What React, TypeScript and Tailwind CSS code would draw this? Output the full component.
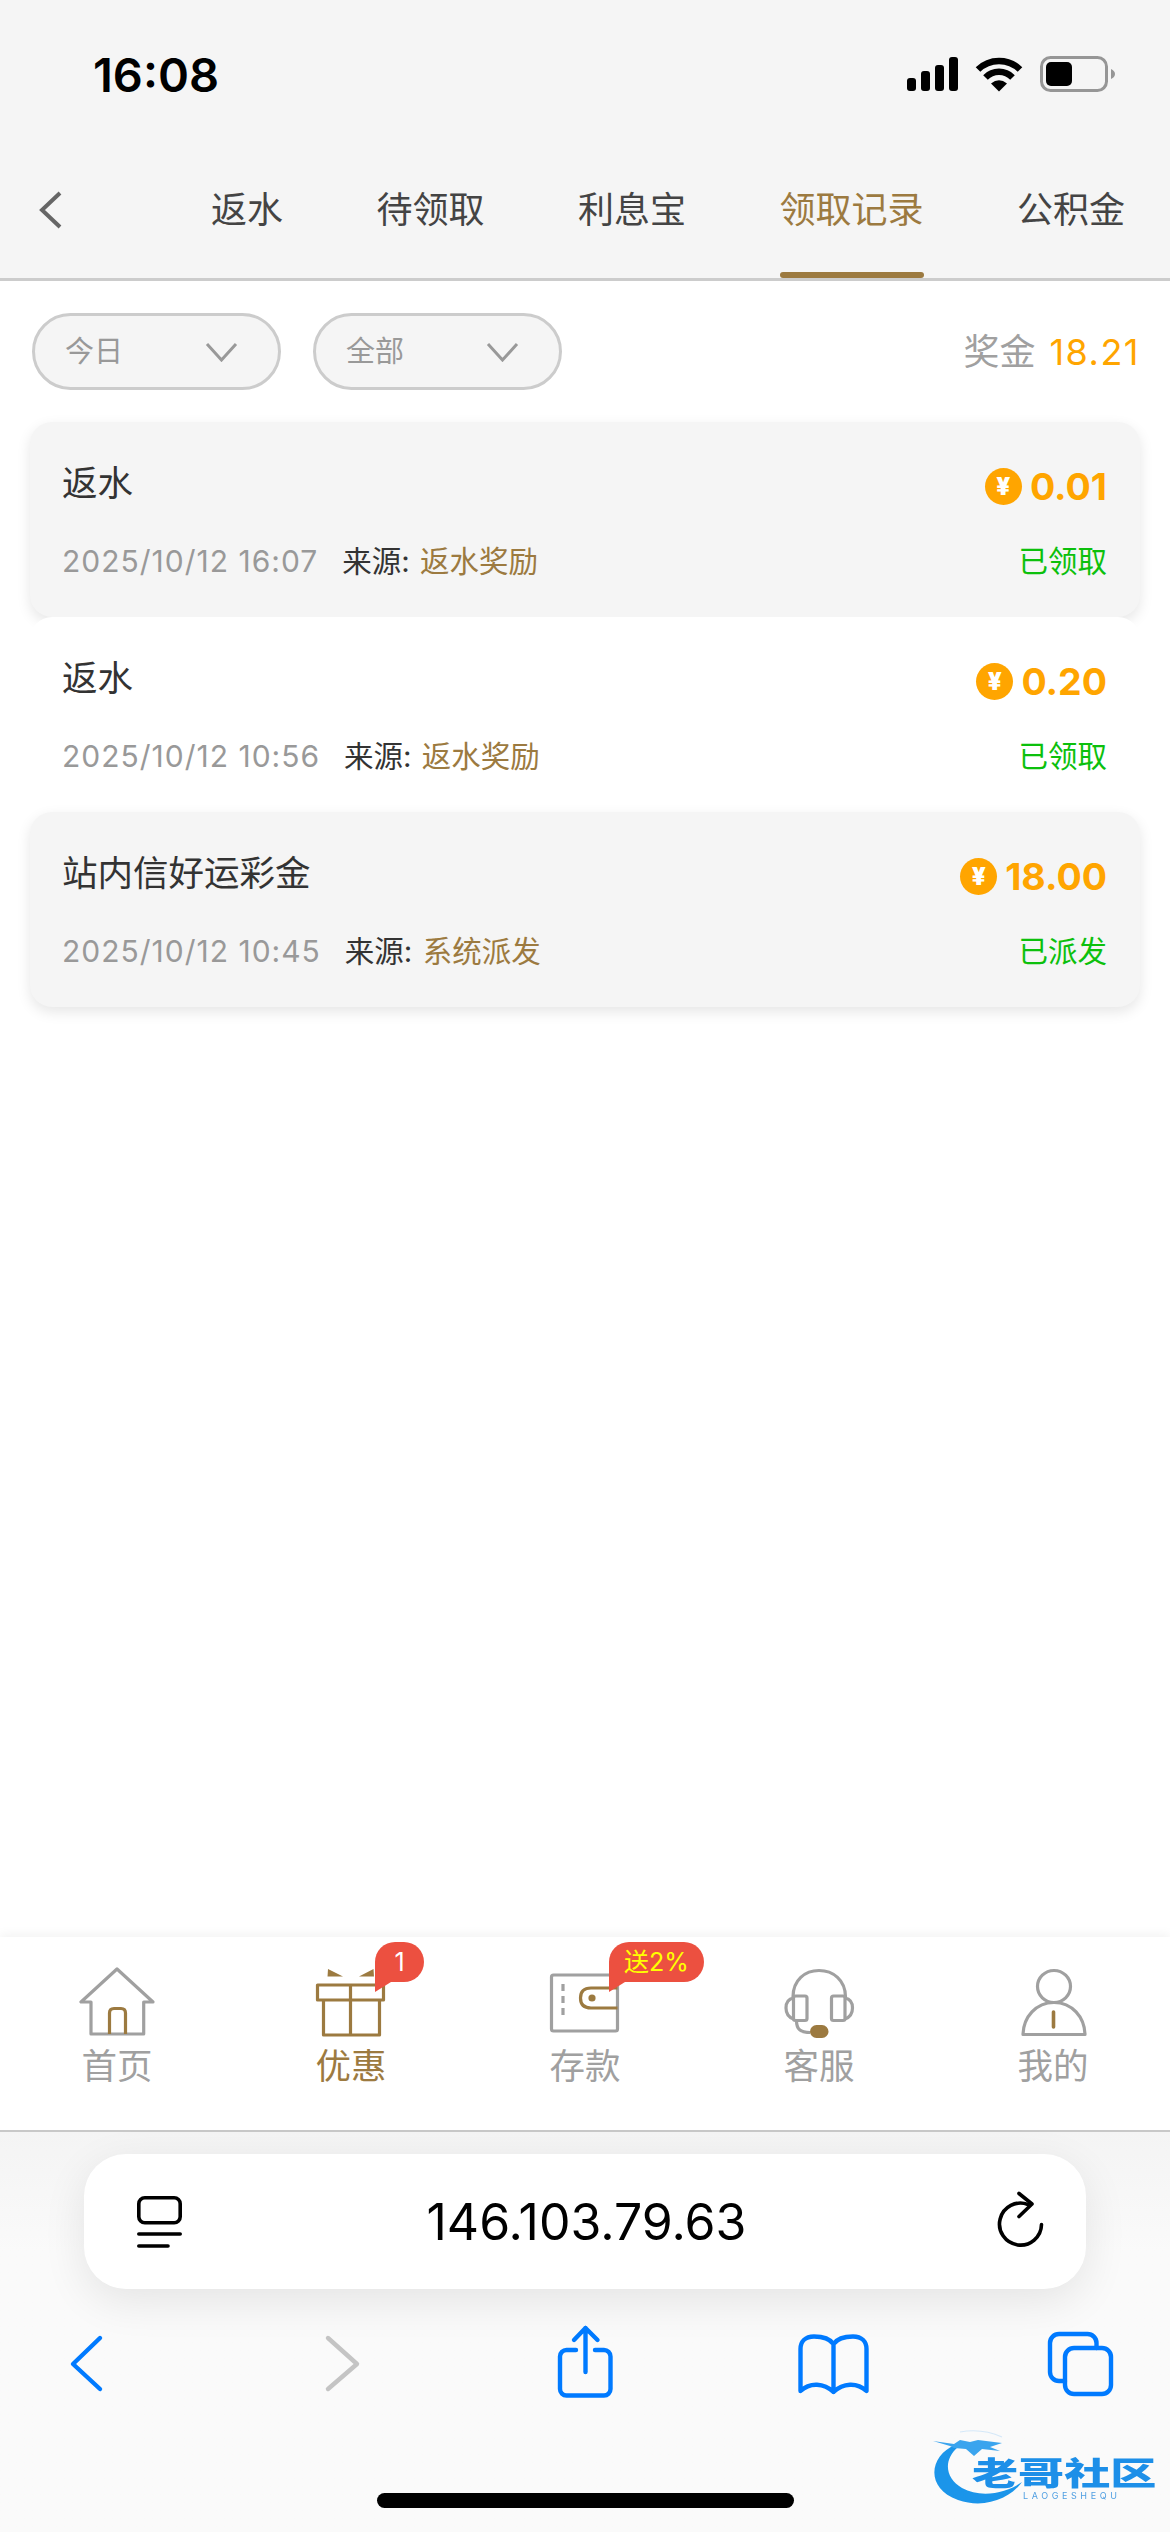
import React from "react";

const BROWN = "#9c7a40";
const GREY = "#a0a0a0";

type Rec = { title: string; amount: string; time: string; source: string; status: string; tint: boolean };

const records: Rec[] = [
  { title: "返水", amount: "0.01", time: "2025/10/12 16:07", source: "返水奖励", status: "已领取", tint: true },
  { title: "返水", amount: "0.20", time: "2025/10/12 10:56", source: "返水奖励", status: "已领取", tint: false },
  { title: "站内信好运彩金", amount: "18.00", time: "2025/10/12 10:45", source: "系统派发", status: "已派发", tint: true },
];

const tabs = ["返水", "待领取", "利息宝", "领取记录", "公积金"];

function StatusIcons() {
  return (
    <div className="flex items-center gap-[17px]">
      <svg width="51" height="34" viewBox="0 0 51 34" fill="#000">
        <rect x="0" y="21" width="9" height="13" rx="3" />
        <rect x="14" y="14" width="9" height="20" rx="3" />
        <rect x="28" y="8" width="9" height="26" rx="3" />
        <rect x="42" y="0" width="9" height="34" rx="3" />
      </svg>
      <svg width="48" height="36" viewBox="0 0 48 36" fill="none" stroke="#000" strokeWidth="6.5">
        <path d="M3 13.5A30 30 0 0 1 45 13.5" />
        <path d="M10.5 21.5A19 19 0 0 1 37.5 21.5" />
        <path d="M24 35.5L16 27.5Q24 21 32 27.5Z" fill="#000" stroke="none" />
      </svg>
      <svg width="75" height="36" viewBox="0 0 75 36" fill="none">
        <rect x="1.5" y="1.5" width="65" height="33" rx="9" stroke="#969696" strokeWidth="3" />
        <rect x="6" y="6" width="26" height="24" rx="5" fill="#000" />
        <path d="M71 13C73.5 14 75 16 75 18C75 20 73.5 22 71 23Z" fill="#969696" />
      </svg>
    </div>
  );
}

function Chevron() {
  return (
    <svg width="33" height="20" viewBox="0 0 33 20" fill="none" stroke="#999" strokeWidth="3">
      <path d="M2 2L16.5 18L31 2" />
    </svg>
  );
}

function FilterPill({ label }: { label: string }) {
  return (
    <div className="flex h-[77px] w-[249px] items-center justify-between rounded-[39px] border-[3px] border-[#cccccc] bg-[#f5f5f5] pl-[30px] pr-[40px]">
      <span className="text-[29px] text-[#999999]">{label}</span>
      <Chevron />
    </div>
  );
}

function Coin() {
  return (
    <span className="flex h-[37px] w-[37px] items-center justify-center rounded-full bg-[#ffa500] text-[24px] font-black leading-none text-white">
      ¥
    </span>
  );
}

function RecordCard({ rec, index }: { rec: Rec; index: number }) {
  // The white row sits flat on the page; only the tinted rows cast a shadow.
  const tone = rec.tint ? "bg-[#f5f5f5] shadow-[0_5px_14px_rgba(0,0,0,0.1)]" : "bg-white";
  const layer = index === 0 ? "z-0" : index === 1 ? "z-10" : "z-20";
  return (
    <div className={`relative ${layer} ${tone} flex h-[195px] flex-col rounded-[22px] pl-[32px] pr-[33px]`}>
      <div className="flex h-[116px] items-center justify-between pt-[13px]">
        <span className="-mt-[6px] text-[35.5px] leading-none text-[#333333]">{rec.title}</span>
        <span className="flex items-center gap-[8px]">
          <Coin />
          <span className="text-[37.5px] font-bold leading-none text-[#ffa500]">{rec.amount}</span>
        </span>
      </div>
      <div className="flex items-center justify-between">
        <div className="flex items-center gap-[24px] text-[29.5px] leading-[46px]">
          <span className="text-[30px] tracking-[1px] text-[#999999]">{rec.time}</span>
          <span className="text-[#333333]">
            来源: <span className="ml-[2px] text-[#9c7a40]">{rec.source}</span>
          </span>
        </div>
        <span className="text-[29.5px] leading-[46px] text-[#0cc00c]">{rec.status}</span>
      </div>
    </div>
  );
}

function Bubble({ children, width }: { children: React.ReactNode; width: string }) {
  return (
    <div className={`absolute left-[64px] -top-[23px] z-10 ${width}`}>
      <div className="flex h-[40px] items-center justify-center rounded-[20px] rounded-bl-none bg-[#ec5040] text-[25px] leading-none">
        {children}
      </div>
      <svg className="block" width="16" height="10" viewBox="0 0 16 10" fill="#ec5040">
        <path d="M0 0H16L0 10Z" />
      </svg>
    </div>
  );
}

function HomeIcon() {
  return (
    <svg width="80" height="72" viewBox="0 0 80 72" fill="none" strokeWidth="3.2" strokeLinejoin="round">
      <path d="M14 37V69H66.7V37H76L40 4L4 37Z" stroke={GREY} />
      <path d="M32.5 69V48Q32.5 43.5 37 43.5H44Q48.5 43.5 48.5 48V69" stroke={BROWN} />
    </svg>
  );
}

function GiftIcon() {
  return (
    <svg width="80" height="72" viewBox="0 0 80 72" fill="none" stroke={BROWN} strokeWidth="3.2" strokeLinejoin="round">
      <rect x="6.5" y="20" width="66" height="15" />
      <path d="M12.5 35V70H68.5V35M39.5 20V70" />
      <path d="M17 4L32 11.5H16.5Z" fill={BROWN} stroke="none" />
      <path d="M62.5 4L48 11.5H63Z" fill={BROWN} stroke="none" />
    </svg>
  );
}

function WalletIcon() {
  return (
    <svg width="80" height="72" viewBox="0 0 80 72" fill="none" strokeWidth="3.2" strokeLinejoin="round">
      <rect x="6.5" y="10" width="66" height="56" rx="2" stroke={GREY} />
      <path d="M18 19V54" stroke={GREY} strokeDasharray="7 5" />
      <path d="M72.5 23H46Q35.5 23 35.5 33Q35.5 43 46 43H72.5" stroke={BROWN} />
      <circle cx="47" cy="33" r="3.6" fill={BROWN} />
    </svg>
  );
}

function HeadsetIcon() {
  return (
    <svg width="80" height="72" viewBox="0 0 80 72" fill="none" stroke={GREY} strokeWidth="3.2" strokeLinejoin="round" className="overflow-visible">
      <path d="M14 32C14 15 26 5.5 40 5.5C54 5.5 66.5 15 66.5 32" />
      <rect x="14.5" y="31" width="13.5" height="24.5" rx="2" />
      <rect x="52.5" y="31" width="13.5" height="24.5" rx="2" />
      <path d="M14.5 33C9 34 7 38 7 43C7 48 9 52 14.5 54" />
      <path d="M66 33C71.5 34 73.5 38 73.5 43C73.5 48 71.5 52 66 54" />
      <path d="M17.5 55.5C17.5 64 21 67.5 31 67.5" />
      <rect x="31" y="60" width="18.5" height="13" rx="6.5" fill={BROWN} stroke="none" />
    </svg>
  );
}

function PersonIcon() {
  return (
    <svg width="80" height="72" viewBox="0 0 80 72" fill="none" stroke={GREY} strokeWidth="3.2" strokeLinejoin="round">
      <ellipse cx="41" cy="21.5" rx="16.5" ry="16" />
      <path d="M10 69.5C10.5 52 23 37.5 41 37.5C59 37.5 71.5 52 72 69.5Z" />
      <path d="M40.5 47V62" stroke={BROWN} strokeLinecap="round" strokeWidth="3.6" />
    </svg>
  );
}

function BottomTab({ label, active, icon, badge }: { label: string; active?: boolean; icon: React.ReactNode; badge?: React.ReactNode }) {
  return (
    <div className="flex flex-col items-center pt-[28px]">
      <div className="relative h-[72px] w-[80px]">
        {icon}
        {badge}
      </div>
      <span className={`mt-[8px] text-[35.5px] leading-[44px] ${active ? "text-[#9c7a40]" : "text-[#a0a0a0]"}`}>{label}</span>
    </div>
  );
}

function PageIcon() {
  return (
    <svg width="45" height="52" viewBox="0 0 45 52" fill="none" stroke="#000" strokeWidth="3.6" strokeLinecap="round">
      <rect x="1.8" y="1.8" width="41.4" height="25" rx="6" />
      <path d="M1.8 38H43.2" />
      <path d="M1.8 50H31" />
    </svg>
  );
}

function ReloadIcon() {
  return (
    <svg width="52" height="62" viewBox="0 0 52 62" fill="none" stroke="#000" strokeWidth="3.6" strokeLinecap="round" strokeLinejoin="round">
      <path d="M33 13.5A21 21 0 1 0 46.5 33.5" />
      <path d="M24 2.5L37 13L24 25.5" />
    </svg>
  );
}

function ToolIcon({ children }: { children: React.ReactNode }) {
  return (
    <svg width="80" height="80" viewBox="0 0 80 80" fill="none" strokeWidth="4.4" strokeLinecap="round" strokeLinejoin="round" stroke="#007aff">
      {children}
    </svg>
  );
}

function Watermark() {
  return (
    <div className="absolute bottom-0 right-0 h-[112px] w-[260px]">
      <svg width="260" height="112" viewBox="0 0 260 112" className="absolute left-0 top-0 blur-[0.7px]">
        <path d="M45 25C20 35 14 68 48 80C74 89 100 79 112 62C95 74 70 78 52 68C35 58 33 40 48 27Z" fill="#1b95ea" />
        <path d="M23 21L44 24L50 20L60 22L68 20L92 23L80 27L90 31L72 29L64 36L56 29L44 28L40 26Z" fill="#3aa4ee" />
        <path d="M50 12Q72 8 92 17" fill="none" stroke="#d5e8f8" strokeWidth="1.2" />
      </svg>
      <span className="absolute left-[62px] top-[39px] origin-left scale-x-[1.44] text-[32px] font-black leading-[30px] text-[#1d8fe8] blur-[0.5px]">
        老哥社区
      </span>
      <span className="absolute left-[113px] top-[71px] text-[9px] leading-[10px] tracking-[3.6px] text-[#4f9fe2] blur-[0.3px]">
        LAOGESHEQU
      </span>
    </div>
  );
}

export default function App() {
  return (
    <div className="relative flex h-[2532px] w-[1170px] flex-col overflow-hidden bg-white font-[family-name:Inter,'Noto_Sans_CJK_SC',sans-serif]">
      {/* system status bar and section tabs */}
      <header className="bg-[#f5f5f5]">
        <div className="flex h-[148px] items-center justify-between pl-[93px] pr-[55px]">
          <span className="text-[47px] font-semibold leading-none text-black">16:08</span>
          <StatusIcons />
        </div>
        <nav className="flex h-[133px] border-b-[3px] border-[#cccccc]">
          <div className="flex w-[211px] items-center pb-[6px] pl-[38px]">
            <svg width="24" height="38" viewBox="0 0 24 38" fill="none" stroke="#666" strokeWidth="4">
              <path d="M22 2L4 19L22 36" />
            </svg>
          </div>
          <div className="flex gap-[93.5px]">
            {tabs.map((t) => {
              const on = t === "领取记录";
              return (
                <div key={t} className="flex flex-col">
                  <span className={`flex flex-1 items-center text-[36px] ${on ? "text-[#9c7a40]" : "text-[#444444]"}`}>{t}</span>
                  <span className={`h-[6px] rounded-[3px] ${on ? "bg-[#9c7a40]" : ""}`} />
                </div>
              );
            })}
          </div>
        </nav>
      </header>

      {/* filters and reward records */}
      <main className="flex-1 px-[30px]">
        <div className="flex items-center justify-between py-[32px] pl-[2px]">
          <div className="flex gap-[32px]">
            <FilterPill label="今日" />
            <FilterPill label="全部" />
          </div>
          <div className="flex items-center gap-[14px] text-[36px]">
            <span className="text-[#a0a0a0]">奖金</span>
            <span className="tracking-[1.5px] text-[#ffa500]">18.21</span>
          </div>
        </div>
        {records.map((r, i) => (
          <RecordCard key={i} rec={r} index={i} />
        ))}
      </main>

      {/* bottom navigation */}
      <section className="grid h-[195px] grid-cols-5 border-b-2 border-[#c8c8c8] bg-white shadow-[0_-3px_10px_rgba(0,0,0,0.05)]">
        <BottomTab label="首页" icon={<HomeIcon />} />
        <BottomTab
          label="优惠"
          active
          icon={<GiftIcon />}
          badge={
            <Bubble width="w-[49px]">
              <span className="text-white">1</span>
            </Bubble>
          }
        />
        <BottomTab
          label="存款"
          icon={<WalletIcon />}
          badge={
            <Bubble width="w-[95px]">
              <span className="whitespace-nowrap text-[#ffff00]">送2%</span>
            </Bubble>
          }
        />
        <BottomTab label="客服" icon={<HeadsetIcon />} />
        <BottomTab label="我的" icon={<PersonIcon />} />
      </section>

      {/* browser chrome */}
      <footer className="h-[400px] bg-gradient-to-b from-[#f4f4f4] to-[#fafafa] to-[30%] pt-[22px]">
        <div className="mx-[84px] flex h-[135px] items-center rounded-[42px] bg-white pl-[53px] pr-[39px] shadow-[0_12px_44px_rgba(0,0,0,0.09)]">
          <PageIcon />
          <span className="mr-[4px] flex-1 text-center text-[50px] leading-none text-black">146.103.79.63</span>
          <ReloadIcon />
        </div>
        <div className="mt-[31px] flex h-[80px] justify-between pl-[46px] pr-[50px]">
          <ToolIcon>
            <path d="M54 18L27 44L54 69" />
          </ToolIcon>
          <ToolIcon>
            <path d="M33 18L62 44L33 69" stroke="#c4c4c4" />
          </ToolIcon>
          <ToolIcon>
            <path d="M33 30H23.5A6.5 6.5 0 0 0 17 36.5V69A6.5 6.5 0 0 0 23.5 75.5H61A6.5 6.5 0 0 0 67.5 69V36.5A6.5 6.5 0 0 0 61 30H52" />
            <path d="M42.5 52V8M31 20L42.5 8L54.5 20" />
          </ToolIcon>
          <ToolIcon>
            <path d="M41.5 24C38 19 31 16.5 22 16.5C13 16.5 8.5 22 8.5 29V71C18 62 32 63 41.5 72C51 63 65 62 74.5 71V29C74.5 22 70 16.5 61 16.5C52 16.5 45 19 41.5 24V72" />
          </ToolIcon>
          <ToolIcon>
            <rect x="25" y="28" width="46" height="46" rx="9" />
            <path d="M56.5 28V23A9 9 0 0 0 47.5 14H19A9 9 0 0 0 10 23V52A9 9 0 0 0 19 61H25" />
          </ToolIcon>
        </div>
        <div className="mx-auto mt-[93px] h-[15px] w-[417px] rounded-full bg-black" />
      </footer>
      <Watermark />
    </div>
  );
}
